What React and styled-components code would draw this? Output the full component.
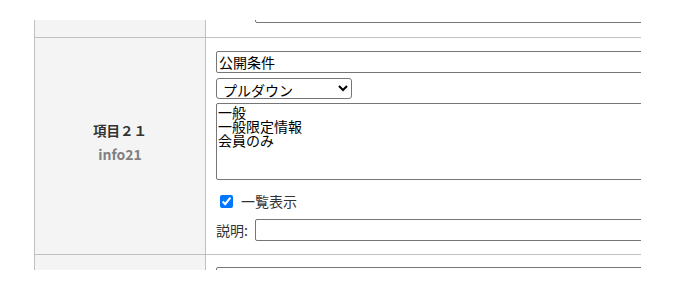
import React from 'react';
import styled, { createGlobalStyle } from 'styled-components';

const GlobalStyle = createGlobalStyle`
  html, body {
    margin: 0;
    background: #fff;
    overflow: hidden;
  }
  body {
    font-family: "Noto Sans CJK JP", "Noto Sans", sans-serif;
    color: #333;
  }
`;

const Page = styled.div`
  padding: 20px 0 0 34px;
`;

const Frame = styled.div`
  width: 607px;
  height: 250px;
  overflow: hidden;
`;

const Table = styled.div`
  width: 900px;
  border-left: 1px solid #c0c0c0;
`;

const Row = styled.div`
  display: grid;
  grid-template-columns: 171px 1fr;
  border-bottom: 1px solid #c0c0c0;
  height: ${(p) => (p.$height ? `${p.$height}px` : 'auto')};
  overflow: hidden;
`;

const LabelCell = styled.div`
  background: #f4f4f4;
  border-right: 1px solid #c0c0c0;
  display: flex;
  flex-direction: column;
  align-items: center;
  justify-content: center;
  gap: 6px;
  padding-bottom: 8px;
`;

const LabelName = styled.div`
  font-size: 13.5px;
  line-height: 18px;
  font-weight: bold;
  color: #333;
`;

const LabelKey = styled.div`
  font-size: 14px;
  line-height: 18px;
  font-weight: bold;
  color: #808080;
`;

const FieldCell = styled.div`
  padding: ${(p) => p.$top}px 10px ${(p) => p.$bottom}px;
  display: flex;
  flex-direction: column;
  align-items: flex-start;
  justify-content: ${(p) => (p.$clip ? 'flex-end' : 'flex-start')};
  overflow: hidden;
`;

const TextInput = styled.input`
  box-sizing: border-box;
  width: ${(p) => p.$width || 600}px;
  height: 22px;
  margin: 0 0 0 ${(p) => p.$indent || 0}px;
  padding: 1px 2px;
  border: 1px solid #767676;
  border-radius: 2px;
  font-family: "Noto Sans CJK JP", sans-serif;
  font-size: 14px;
  line-height: 18px;
  color: #000;
  background: #fff;
  flex-shrink: 0;
`;

const Select = styled.select`
  box-sizing: border-box;
  width: 136px;
  height: 21px;
  margin: 5px 0 0;
  padding: 0 2px;
  border: 1px solid #767676;
  border-radius: 3px;
  font-family: "Noto Sans CJK JP", sans-serif;
  font-size: 14px;
  color: #000;
  background: #fff;
`;

const Options = styled.textarea`
  box-sizing: border-box;
  width: 600px;
  height: 77px;
  margin: 4px 0 0;
  padding: 1px 1px;
  border: 1px solid #767676;
  border-radius: 2px;
  font-family: "Noto Sans CJK JP", sans-serif;
  font-size: 14px;
  line-height: 14px;
  color: #000;
  resize: none;
  display: block;
`;

const CheckLine = styled.label`
  display: flex;
  align-items: center;
  height: 20px;
  margin-top: 11px;
  font-size: 14px;
  line-height: 20px;
  color: #333;
`;

const Check = styled.input`
  width: 13px;
  height: 13px;
  margin: 0 8px 0 4px;
`;

const DescLine = styled.div`
  display: flex;
  align-items: center;
  gap: 4px;
  height: 22px;
  margin-top: 8px;
  font-size: 14px;
  line-height: 20px;
  color: #333;
`;

const DescLabel = styled.span`
  width: 35px;
  white-space: nowrap;
`;

export default function App() {
  return (
    <Page>
      <GlobalStyle />
      <Frame>
        <Table>
          <Row $height={17}>
            <LabelCell />
            <FieldCell $top={0} $bottom={14} $clip>
              <TextInput type="text" $width={560} $indent={39} />
            </FieldCell>
          </Row>
          <Row>
            <LabelCell>
              <LabelName>項目２１</LabelName>
              <LabelKey>info21</LabelKey>
            </LabelCell>
            <FieldCell $top={13} $bottom={13}>
              <TextInput type="text" defaultValue="公開条件" />
              <Select defaultValue="pulldown">
                <option value="pulldown">プルダウン</option>
                <option value="radio">ラジオボタン</option>
                <option value="check">チェックボックス</option>
              </Select>
              <Options defaultValue={'一般\n一般限定情報\n会員のみ'} />
              <CheckLine>
                <Check type="checkbox" defaultChecked />
                一覧表示
              </CheckLine>
              <DescLine>
                <DescLabel>説明:</DescLabel>
                <TextInput type="text" $width={560} />
              </DescLine>
            </FieldCell>
          </Row>
          <Row>
            <LabelCell />
            <FieldCell $top={12} $bottom={12}>
              <TextInput type="text" />
            </FieldCell>
          </Row>
        </Table>
      </Frame>
    </Page>
  );
}
